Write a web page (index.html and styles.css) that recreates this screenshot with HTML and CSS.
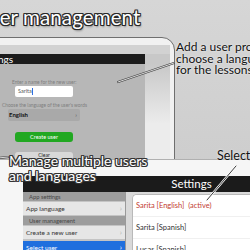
FILE: index.html
```html
<!DOCTYPE html>
<html lang="en">
<head>
  <meta charset="UTF-8" />
  <title>User management</title>
  <link rel="stylesheet" href="styles.css">
</head>
<body>
  <div class="stage">
    <h1 class="title">User management</h1>

    <div class="tablet tablet-back">
      <div class="screen">
        <div class="status"></div>
        <div class="split">
          <div class="modal">
            <div class="modal-bar">Settings</div>
            <div class="form">
              <div class="label label-name">Enter a name for the new user:</div>
              <div class="input">Sarita<span class="caret"></span></div>
              <div class="label">Choose the language of the user's words</div>
              <div class="select"><span>English</span><span class="chev">&rsaquo;</span></div>
              <div class="btn btn-create">Create user</div>
              <div class="btn btn-clear">Clear</div>
            </div>
          </div>
          <div class="side"></div>
        </div>
      </div>
    </div>

    <div class="tablet tablet-front">
      <div class="screen">
        <div class="navbar">
          <div class="nav-master"></div>
          <div class="nav-detail">Settings</div>
        </div>
        <div class="panes">
          <div class="master">
            <div class="section">App settings</div>
            <div class="row">App language<span class="chev">&rsaquo;</span></div>
            <div class="section">User management</div>
            <div class="row">Create a new user<span class="chev">&rsaquo;</span></div>
            <div class="row row-selected">Select user<span class="chev">&rsaquo;</span></div>
          </div>
          <div class="detail">
            <div class="group">
              <div class="user user-active">Sarita [English]&nbsp; (active)</div>
              <div class="user">Sarita [Spanish]</div>
              <div class="user">Lucas [Spanish]</div>
            </div>
          </div>
        </div>
      </div>
    </div>

    <p class="caption caption-add">Add a user profile and<br>choose a language<br>for the lessons</p>
    <p class="caption caption-manage">Manage multiple users<br>and languages</p>
    <p class="caption caption-select">Select a user</p>

    <svg class="pointers" width="250" height="250" viewBox="0 0 250 250">
      <g stroke-linecap="round" fill="none">
        <line x1="118" y1="82" x2="174" y2="63" stroke="#444" stroke-width="2.2"/>
        <line x1="118" y1="82" x2="174" y2="63" stroke="#fff" stroke-width="0.8"/>
        <line x1="-2" y1="158" x2="8" y2="157" stroke="#444" stroke-width="2.2"/>
        <line x1="-2" y1="158" x2="8" y2="157" stroke="#fff" stroke-width="0.8"/>
        <line x1="236" y1="166" x2="207" y2="200" stroke="#fff" stroke-width="2"/>
        <line x1="236" y1="166" x2="207" y2="200" stroke="#222" stroke-width="0.9"/>
      </g>
    </svg>
  </div>
</body>
</html>
```

FILE: styles.css
```css
body {
  margin: 0;
  font-family: Lato, "Noto Sans", sans-serif;
  background-color: #cdcdcd;
}

.stage {
  position: relative;
  width: 250px;
  height: 250px;
  overflow: hidden;
  background: linear-gradient(#d6d6d6, #c9c9c9);
}

.title {
  margin: 0;
  padding-top: 5px;
  text-indent: -24px;
  font-size: 20.5px;
  font-weight: normal;
  line-height: 24px;
  letter-spacing: 0.1px;
  white-space: nowrap;
  color: #fff;
  text-shadow:
    1px 0 0 #2a2a2a, -1px 0 0 #2a2a2a, 0 1px 0 #2a2a2a, 0 -1px 0 #2a2a2a,
    1px 1px 0 #2a2a2a, -1px -1px 0 #2a2a2a, 1px -1px 0 #2a2a2a, -1px 1px 0 #2a2a2a,
    1px 2px 2px rgba(0,0,0,0.4);
}

/* tablets */
.tablet {
  position: absolute;
  box-sizing: border-box;
  background-color: #f1f1f1;
  border: 1px solid #6f6f6f;
  border-radius: 13px;
}

.tablet-back {
  left: -40px;
  top: 37px;
  width: 215px;
  height: 200px;
  padding: 7px 4px 0 0;
}

.tablet-front {
  left: -10px;
  top: 159px;
  width: 268px;
  height: 120px;
  padding: 16px 0 0 32px;
  border-color: #b0b0b0;
  background-color: #f6f6f6;
  border-radius: 10px;
}

.screen {
  display: flex;
  flex-direction: column;
  height: 100%;
}

/* back tablet: add user form */
.status {
  height: 9px;
  background-color: #d2d2d2;
}

.split {
  display: flex;
  flex: 1;
}

.modal {
  flex: 0 0 184px;
  display: flex;
  flex-direction: column;
}

.modal-bar {
  height: 10px;
  padding-left: 17px;
  background-color: #1c1c1c;
  color: #fff;
  font-size: 10px;
  line-height: 10px;
}

.form {
  flex: 1;
  display: flex;
  flex-direction: column;
  align-items: flex-start;
  padding: 16px 0 0 41px;
  background-color: #b7b7b7;
}

.label {
  font-size: 4.8px;
  line-height: 5px;
  color: #7e7e7e;
  white-space: nowrap;
}

.label-name {
  margin-left: 10px;
}

.input {
  box-sizing: border-box;
  width: 58px;
  height: 11px;
  margin: 1px 0 6px 13px;
  padding-left: 3px;
  background-color: #fff;
  border-radius: 2px;
  font-size: 5.5px;
  line-height: 11px;
  color: #555;
}

.caret {
  display: inline-block;
  width: 0.8px;
  height: 7px;
  margin-left: 0.5px;
  vertical-align: middle;
  background-color: #2f6fe0;
}

.select {
  box-sizing: border-box;
  display: flex;
  justify-content: space-between;
  width: 72px;
  height: 12px;
  margin: 1px 0 0 6px;
  padding: 0 3px 0 1px;
  background-color: #a9a9a9;
  border-radius: 2px;
  font-size: 6px;
  font-weight: bold;
  line-height: 12px;
  color: #111;
}

.select .chev {
  font-weight: normal;
  color: #555;
}

.btn {
  width: 58px;
  margin-left: 13px;
  border-radius: 3px;
  text-align: center;
  font-size: 5.5px;
}

.btn-create {
  height: 10px;
  margin-top: 11px;
  background-color: #22a822;
  color: #fff;
  line-height: 10px;
}

.btn-clear {
  height: 14px;
  margin-top: 10px;
  background-color: #d8d8d8;
  color: #222;
  font-size: 5px;
  line-height: 7px;
}

.side {
  flex: 1;
  background: linear-gradient(#c8c8c8 10px, #ececec 70px);
}

/* front tablet: settings split view */
.navbar {
  display: flex;
  height: 16px;
  background-color: #1b1b1b;
  color: #fff;
  font-size: 11.5px;
  line-height: 16px;
}

.nav-master {
  flex: 0 0 103px;
}

.nav-detail {
  flex: 1;
  text-align: center;
}

.panes {
  display: flex;
  flex: 1;
}

.master {
  flex: 0 0 102px;
  display: flex;
  flex-direction: column;
  gap: 1px;
  border-right: 1px solid #9a9a9a;
  background-color: #c4c4c4;
}

.section {
  height: 9px;
  padding-left: 6px;
  background-color: #9d9d9d;
  color: #474747;
  font-size: 5.8px;
  line-height: 9px;
}

.row {
  display: flex;
  justify-content: space-between;
  height: 13px;
  padding: 0 3px;
  background-color: #e6e6e6;
  color: #333;
  font-size: 6.5px;
  line-height: 13px;
}

.row .chev {
  color: #b5b5b5;
  font-size: 8px;
}

.row-selected {
  margin-top: 1px;
  background-color: #1f6fde;
  color: #fff;
}

.row-selected .chev {
  color: #fff;
}

.detail {
  flex: 1;
  padding: 2px 0 0 6px;
  background-color: #d9d9d9;
}

.group {
  display: flex;
  flex-direction: column;
  gap: 1px;
  height: 100%;
  background-color: #f0f0f0;
  border: 1px solid #b9b9b9;
  border-right: none;
  border-radius: 5px 0 0 0;
  overflow: hidden;
}

.user {
  flex: 0 0 21px;
  padding-left: 3px;
  background-color: #fff;
  color: #333;
  font-size: 7.5px;
  line-height: 21px;
  white-space: nowrap;
}

.user-active {
  color: #c23b30;
}

/* callouts laid over the screens */
.caption {
  position: absolute;
  margin: 0;
  white-space: nowrap;
}

.caption-add {
  left: 176px;
  top: 41px;
  font-size: 12px;
  line-height: 11.5px;
  color: #111;
  text-shadow: 0 0 2px #fff;
}

.caption-manage {
  left: 9px;
  top: 153px;
  font-size: 14px;
  line-height: 15px;
  color: #fff;
  text-shadow:
    1px 0 0 #333, -1px 0 0 #333, 0 1px 0 #333, 0 -1px 0 #333,
    1px 1px 0 #333, -1px -1px 0 #333, 1px -1px 0 #333, -1px 1px 0 #333;
}

.caption-select {
  left: 217px;
  top: 149px;
  font-size: 12.5px;
  line-height: 14px;
  color: #111;
  text-shadow: 0 0 2px #fff;
}

.pointers {
  position: absolute;
  left: 0;
  top: 0;
}
```
